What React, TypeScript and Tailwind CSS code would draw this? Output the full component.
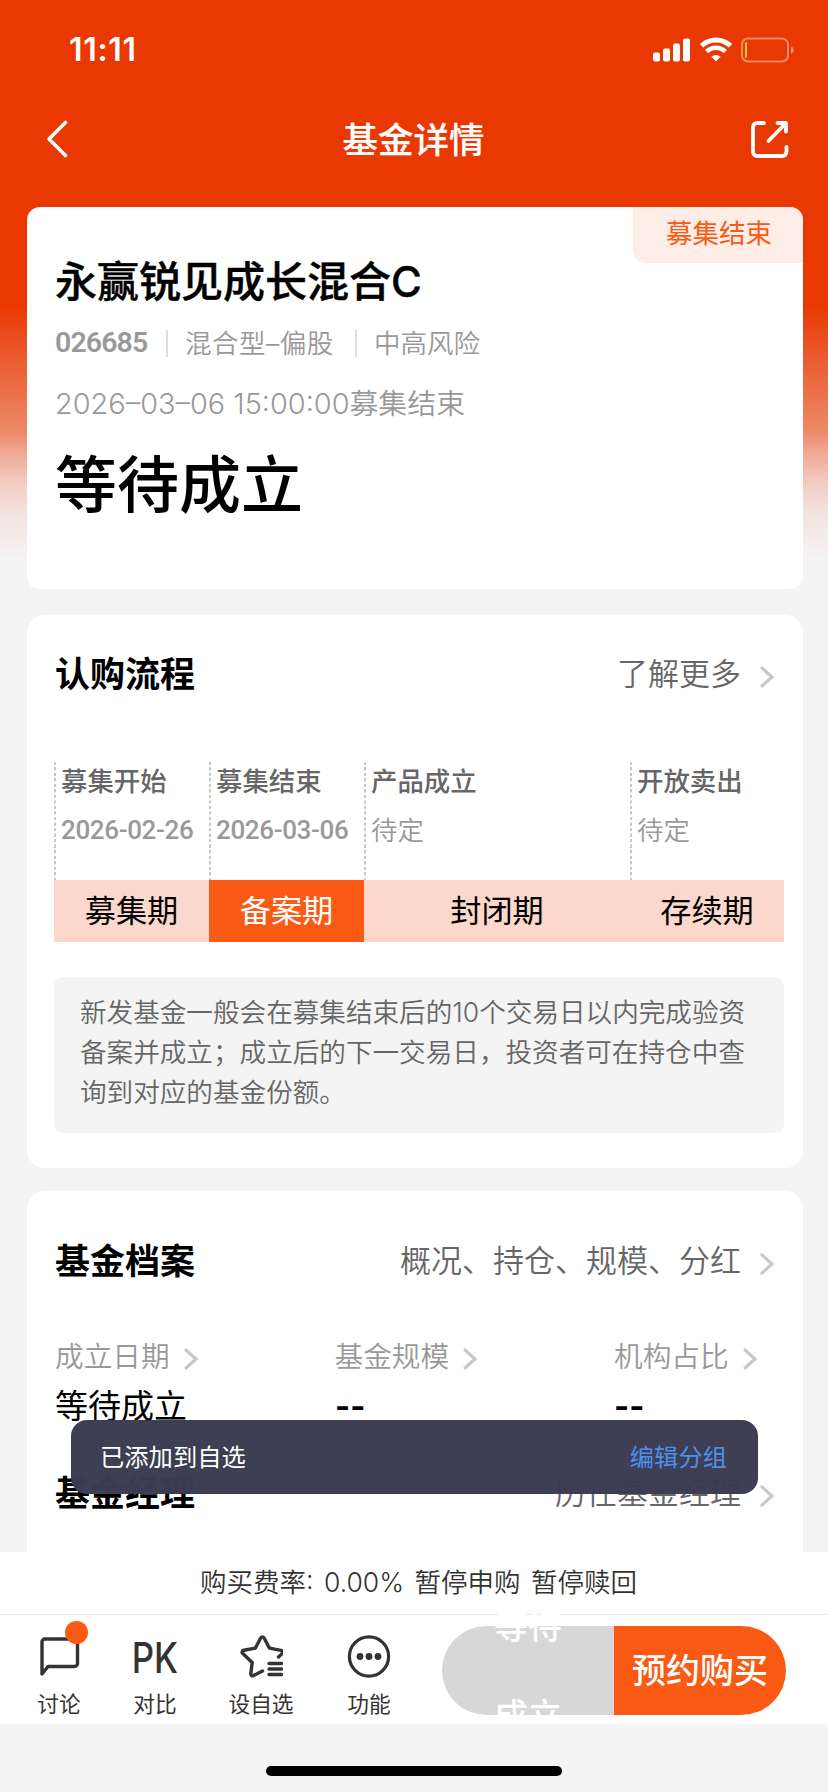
import React from "react";
import clsx from "clsx";

const stages = [
  { title: "募集开始", date: "2026-02-26", period: "募集期", width: "w-[155px]" },
  { title: "募集结束", date: "2026-03-06", period: "备案期", width: "w-[155px]", active: true },
  { title: "产品成立", date: "待定", period: "封闭期", width: "w-[266px]" },
  { title: "开放卖出", date: "待定", period: "存续期", width: "w-[154px]" },
];

const archives = [
  { label: "成立日期", value: "等待成立" },
  { label: "基金规模", value: "--" },
  { label: "机构占比", value: "--" },
];

export default function App() {
  return (
    <div className="relative flex h-[1792px] w-[828px] flex-col overflow-hidden bg-[#f4f4f4] font-['Inter','Noto_Sans_CJK_SC',sans-serif] text-black">
      <main className="h-[1552px] shrink-0 overflow-hidden bg-[linear-gradient(180deg,#e93802_0px,#e93802_305px,#ea5c31_360px,#ed8867_430px,#f0ab98_455px,#f2cdc3_485px,#f3e4e0_515px,#f4f4f4_560px)]">
        <StatusBar />
        <NavBar />
        <FundCard />
        <ProcessCard />
        <ArchiveCard />
      </main>
      <Toast />
      <BottomBar />
      <div className="z-10 flex h-[68px] shrink-0 justify-center bg-[#f4f4f4] pt-[42px]">
        <div className="h-[10px] w-[296px] rounded-full bg-black" />
      </div>
    </div>
  );
}

// time, signal, wifi, battery
const StatusBar = () => {
  return (
    <div className="flex h-[99px] items-center justify-between pl-[69px] pr-[34px] text-white">
      <span className="text-[32px] font-semibold leading-none tracking-[0.7px]">11:11</span>
      <svg className="h-[26px] w-[142px]" viewBox="0 0 142 26" fill="none">
        <rect x="1" y="15.5" width="7" height="9" rx="2" fill="white" />
        <rect x="11" y="11.5" width="7" height="13" rx="2" fill="white" />
        <rect x="21" y="6.5" width="7" height="18" rx="2" fill="white" />
        <rect x="31" y="1.5" width="7" height="23" rx="2" fill="white" />
        <path d="M49.5 8.7a21 21 0 0 1 29 0" stroke="white" strokeWidth="5" />
        <path d="M54.7 14.6a13 13 0 0 1 18.6 0" stroke="white" strokeWidth="4.6" />
        <path d="M64 24.6l-4.6-4.8a6.6 6.6 0 0 1 9.2 0z" fill="white" />
        <rect x="90" y="1.500" width="46" height="23" rx="6" stroke="white" strokeOpacity=".42" strokeWidth="2" />
        <path d="M139 9.500c3.400.8 3.400 6.400 0 7.200z" fill="white" fillOpacity=".45" />
        <rect x="93" y="5" width="2" height="16" rx="1" fill="#fcc62e" />
      </svg>
    </div>
  );
};

const NavBar = () => {
  return (
    <div className="flex h-[80px] items-center justify-between pl-[45px] pr-[38px] text-white">
      <svg className="h-[40px] w-[40px]" viewBox="0 0 40 40" fill="none" stroke="white" strokeWidth="3.600" strokeLinecap="round" strokeLinejoin="round">
        <path d="M20.500 3.500L4 20l16.500 16.500" />
      </svg>
      <h1 className="relative -left-[4px] top-[2px] text-[35.500px] font-medium leading-[44px] [-webkit-text-stroke:0.2px_white]">基金详情</h1>
      <svg className="h-[40px] w-[40px]" viewBox="0 0 40 40" fill="none" stroke="white" strokeWidth="3.800" strokeLinecap="round" strokeLinejoin="round">
        <path d="M14 4H7a4 4 0 0 0-4 4V33a4 4 0 0 0 4 4h25.500a4 4 0 0 0 4-4v-5" />
        <path d="M27.500 4h8.500V12.500M36 4L18.500 22" />
      </svg>
    </div>
  );
};

// fund name, code and state
const FundCard = () => {
  return (
    <section className="relative mx-auto mt-[28px] h-[382px] w-[776px] -translate-x-[-1px] overflow-hidden rounded-[13px] bg-white px-[28px] pt-[47px]">
      <div className="absolute right-0 top-0 h-[56px] w-[170px] rounded-bl-[13px] bg-[#feece6] pl-[33px] text-[26.500px] leading-[52px] text-[#f95b14]">
        募集结束
      </div>
      <h2 className="text-[42px] font-medium leading-[56px] [-webkit-text-stroke:0.4px_black]">永赢锐见成长混合C</h2>
      <div className="mt-[13px] flex h-[40px] items-center text-[26.500px] leading-[40px] text-[#999]">
        <span className="w-[111px] font-['Roboto',sans-serif] text-[28.500px] font-semibold tracking-[-0.9px]">026685</span>
        <i className="h-[27px] w-[2px] bg-[#ddd]" />
        <span className="w-[187px] pl-[17px] font-[350] tracking-[0.5px]">混合型–偏股</span>
        <i className="h-[27px] w-[2px] bg-[#ddd]" />
        <span className="pl-[17px] font-[350]">中高风险</span>
      </div>
      <div className="mt-[20px] text-[28.900px] font-[350] leading-[41px] text-[#999]">
        <span>2026–03–06 15:00:00</span>募集结束
      </div>
      <div className="mt-[26px] text-[62px] font-medium leading-[71px]">等待成立</div>
    </section>
  );
};

const ProcessCard = () => {
  return (
    <section className="mx-auto mt-[26px] h-[553px] w-[776px] -translate-x-[-1px] rounded-[18px] bg-white pt-[34px]">
      <SectionHead title="认购流程" more="了解更多" />
      <div className="ml-[27px] mt-[63px] flex w-[730px]">
        {stages.map((s) => (
          <div key={s.title} className={clsx("flex h-[118px] shrink-0", s.width)}>
            <div className="h-full w-[2px] bg-[repeating-linear-gradient(160deg,#c8c8c8_0px,#c8c8c8_3px,#fff_3px,#fff_5.200px)]" />
            <div className="pl-[5px]">
              <div className="text-[26.400px] font-medium leading-[38px] text-[#666]">{s.title}</div>
              {s.date === "待定" ? (
                <div className="mt-[10px] text-[26.400px] font-[350] leading-[40px] text-[#999]">{s.date}</div>
              ) : (
                <div className="mt-[10px] whitespace-nowrap font-['Roboto',sans-serif] text-[26px] font-medium leading-[40px] tracking-[-0.35px] text-[#999]">
                  {s.date}
                </div>
              )}
            </div>
          </div>
        ))}
      </div>
      <div className="ml-[27px] flex w-[730px] bg-[#fcd8cc]">
        {stages.map((s) => (
          <div
            key={s.period}
            className={clsx(
              "h-[62px] shrink-0 text-center text-[31.200px] leading-[62px]",
              s.width,
              s.active && "bg-[#fb5a14] text-white"
            )}
          >
            {s.period}
          </div>
        ))}
      </div>
      <p className="ml-[27px] mt-[35px] h-[156px] w-[730px] rounded-[9px] bg-[#f4f4f4] pl-[26px] pr-[20px] pt-[15px] text-[26.600px] font-[350] leading-[40px] text-[#666]">
        新发基金一般会在募集结束后的10个交易日以内完成验资备案并成立；成立后的下一交易日，投资者可在持仓中查询到对应的基金份额。
      </p>
    </section>
  );
};

const ArchiveCard = () => {
  return (
    <section className="mx-auto mt-[23px] h-[500px] w-[776px] -translate-x-[-1px] rounded-[18px] bg-white pt-[45px]">
      <SectionHead title="基金档案" more="概况、持仓、规模、分红" />
      <div className="ml-[28px] mt-[51px] flex">
        {archives.map((a) => (
          <div key={a.label} className="w-[279.500px] shrink-0">
            <div className="flex h-[40px] items-center text-[28.700px] font-[350] leading-[40px] text-[#999]">
              {a.label}
              <Chevron className="ml-[12px] mt-[4px]" />
            </div>
            <div className="mt-[7px] h-[44px] text-[33px] leading-[44px]">{a.value === "--" ? <Dashes /> : a.value}</div>
          </div>
        ))}
      </div>
      <div className="mt-[40px]">
        <SectionHead title="基金经理" more="历任基金经理" />
      </div>
    </section>
  );
};

// placeholder for a missing figure
const Dashes = () => (
  <span className="inline-block origin-left scale-x-[1.18] font-['Roboto',sans-serif] text-[33px] font-bold leading-[42px]">--</span>
);

const SectionHead = ({ title, more }: { title: string; more: string }) => {
  return (
    <div className="flex h-[50px] items-center justify-between pl-[28px] pr-[28px]">
      <h3 className="text-[35px] font-semibold leading-[50px]">{title}</h3>
      <div className="flex items-center text-[31px] font-[350] leading-[50px] text-[#666]">
        {more}
        <Chevron className="ml-[17px] mt-[6px]" />
      </div>
    </div>
  );
};

const Chevron = ({ className }: { className?: string }) => {
  return (
    <svg className={clsx("h-[24px] w-[17px]", className)} viewBox="0 0 17 24" fill="none" stroke="#c8c8c8" strokeWidth="3.200" strokeLinecap="round">
      <path d="M4 3l10 9L4 21" />
    </svg>
  );
};

const Toast = () => {
  return (
    <div className="absolute left-[71px] top-[1420px] flex h-[74px] w-[687px] items-center justify-between rounded-[16px] bg-[#3b3c50]/[0.985] pl-[29px] pr-[31px] text-[24.300px] leading-[40px]">
      <span className="-mt-[1px] text-white">已添加到自选</span>
      <span className="-mt-[1px] text-[#4a90ee]">编辑分组</span>
    </div>
  );
};

// fee line and the tab bar with buy buttons
const BottomBar = () => {
  return (
    <footer className="h-[172px] shrink-0 bg-white text-[#333]">
      <div className="h-[63px] border-b border-[#e6e6e6] pl-[200px] text-[26.500px] font-[350] leading-[61px] [word-spacing:3px]">
        购买费率: 0.00% 暂停申购 暂停赎回
      </div>
      <div className="flex h-[109px] pl-[20px]">
        <Tab label="讨论" className="w-[78px]">
          <svg className="h-[44px] w-[44px] overflow-visible" viewBox="0 0 44 44" fill="none">
            <path d="M5 40V8a3 3 0 0 1 3-3h29.500a3 3 0 0 1 3 3v21.500a3 3 0 0 1-3 3H11z" stroke="#333" strokeWidth="3.400" strokeLinejoin="round" />
            <circle cx="39.500" cy="-1.500" r="11.500" fill="#fb5a14" />
          </svg>
        </Tab>
        <Tab label="对比" className="w-[114px]">
          <div className="h-[44px] scale-x-[.83] whitespace-nowrap text-[42px] font-[450] leading-[47px]">PK</div>
        </Tab>
        <Tab label="设自选" className="w-[98px]">
          <svg className="h-[44px] w-[44px]" viewBox="0 0 44 44" fill="none" stroke="#333" strokeWidth="3.400" strokeLinecap="round" strokeLinejoin="round">
            <path d="M23.500 37l-9 4.600c-1.500.7-2.900-.3-2.700-1.900l1.400-11.200-9.400-8.900c-1.300-1.200-.8-3 1-3.300l11.500-2.100L21.700 4c.8-1.500 2.600-1.500 3.400 0l5.400 10.200 11.500 2.100c1.700.4 2.300 2 1 3.300L39.500 23" />
            <path d="M30 29.500h12.500M30 35h12.500M30 40.500h12.500" />
          </svg>
        </Tab>
        <Tab label="功能" className="w-[118px]">
          <svg className="h-[44px] w-[44px]" viewBox="0 0 44 44" fill="none">
            <circle cx="22" cy="22.500" r="19.600" stroke="#333" strokeWidth="3.200" />
            <circle cx="13" cy="22.500" r="3.400" fill="#333" />
            <circle cx="22" cy="22.500" r="3.400" fill="#333" />
            <circle cx="31" cy="22.500" r="3.400" fill="#333" />
          </svg>
        </Tab>
        <div className="ml-[14px] mt-[11px] flex h-[89px] text-[34px] font-medium text-white">
          <button className="flex w-[172px] items-center justify-center rounded-l-full bg-[#d7d7d7]">
            {/* the label wraps and runs out of the button */}
            <span className="w-[68px] leading-[89px]">等待成立</span>
          </button>
          <button className="w-[172px] whitespace-nowrap rounded-r-full bg-[#fb5a14] leading-[89px]">预约购买</button>
        </div>
      </div>
    </footer>
  );
};

const Tab = ({ label, className, children }: { label: string; className: string; children: React.ReactNode }) => {
  return (
    <div className={clsx("flex shrink-0 flex-col items-center pt-[19px]", className)}>
      {children}
      <span className="mt-[13px] whitespace-nowrap text-[21.700px] leading-[26px]">{label}</span>
    </div>
  );
};
